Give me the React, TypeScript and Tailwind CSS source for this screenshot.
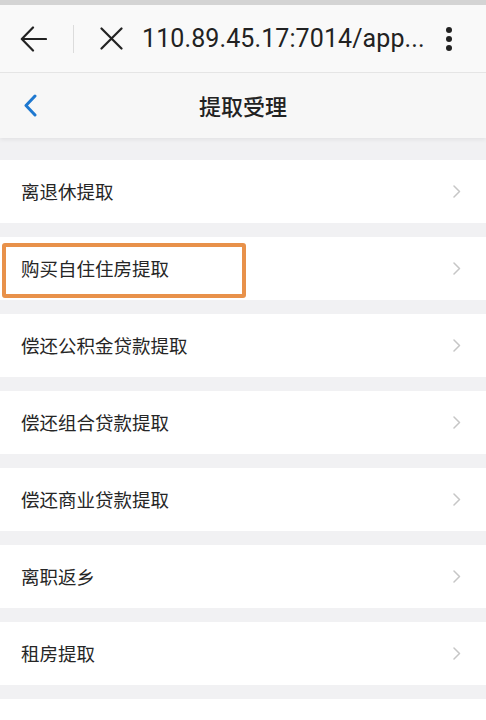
import React from "react";

const items = [
  "离退休提取",
  "购买自住住房提取",
  "偿还公积金贷款提取",
  "偿还组合贷款提取",
  "偿还商业贷款提取",
  "离职返乡",
  "租房提取",
  "",
];

function Chevron() {
  return (
    <svg width="8" height="13" viewBox="0 0 8 13" fill="none">
      <path d="M1 1l5.5 5.5L1 12" stroke="#c6c6c6" strokeWidth="1.5" strokeLinecap="round" strokeLinejoin="round" />
    </svg>
  );
}

export default function App() {
  return (
    <div
      className="w-[486px] h-[720px] overflow-hidden bg-[#f1f1f3] flex flex-col"
      style={{ fontFamily: '"Noto Sans CJK SC", "Noto Sans", sans-serif' }}
    >
      <div className="h-[5px] bg-[#d4d4d4] shrink-0" />
      {/* browser bar */}
      <div className="h-[68px] shrink-0 bg-[#f9f9f9] border-b border-[#e6e6e6] flex items-center relative">
        <div className="w-[73px] flex items-center pl-[20px]">
          <svg width="27" height="26" viewBox="0 0 27 26" fill="none">
            <path d="M26 13H2M13 1.5L1.8 13 13 24.5" stroke="#222" strokeWidth="2.2" strokeLinecap="round" strokeLinejoin="round" />
          </svg>
        </div>
        <div className="w-px h-[28px] bg-[#dcdcdc]" />
        <div className="pl-[26px] flex items-center">
          <svg width="23" height="23" viewBox="0 0 23 23" fill="none">
            <path d="M1.5 1.5l20 20M21.5 1.5l-20 20" stroke="#222" strokeWidth="2.2" strokeLinecap="round" />
          </svg>
        </div>
        <div
          className="pl-[19px] text-[25px] text-[#222] leading-none tracking-[0.1px]"
          style={{ fontFamily: 'Roboto, "Noto Sans", sans-serif' }}
        >
          110.89.45.17:7014/app...
        </div>
        <div className="ml-auto mr-[34px] flex flex-col gap-[3px] items-center">
          <div className="w-[6px] h-[6px] rounded-full bg-[#222]" />
          <div className="w-[6px] h-[6px] rounded-full bg-[#222]" />
          <div className="w-[6px] h-[6px] rounded-full bg-[#222]" />
        </div>
      </div>
      {/* app header */}
      <div className="h-[65px] shrink-0 bg-[#f7f7f7] flex items-center relative shadow-[0_2px_4px_rgba(0,0,0,0.06)]">
        <div className="pl-[23px] flex items-center">
          <svg width="14" height="23" viewBox="0 0 14 23" fill="none">
            <path d="M12 2L3 11.5 12 21" stroke="#1e78d0" strokeWidth="3" strokeLinecap="round" strokeLinejoin="round" />
          </svg>
        </div>
        <div className="absolute inset-0 flex items-center justify-center text-[22px] text-[#222] font-medium">
          提取受理
        </div>
      </div>
      {/* list */}
      <div className="flex flex-col gap-[14px] pt-[22px]">
        {items.map((t, i) => (
          <div key={i} className="h-[63px] shrink-0 bg-white flex items-center pl-[21px] pr-[25px] relative">
            <span className="text-[18.5px] text-[#262626]">{t}</span>
            {t && (
              <span className="ml-auto flex items-center">
                <Chevron />
              </span>
            )}
            {i === 1 && (
              <div className="absolute left-[2px] top-[6px] w-[244px] h-[55px] border-4 border-[#e8914a] rounded-[3px]" />
            )}
          </div>
        ))}
      </div>
    </div>
  );
}
